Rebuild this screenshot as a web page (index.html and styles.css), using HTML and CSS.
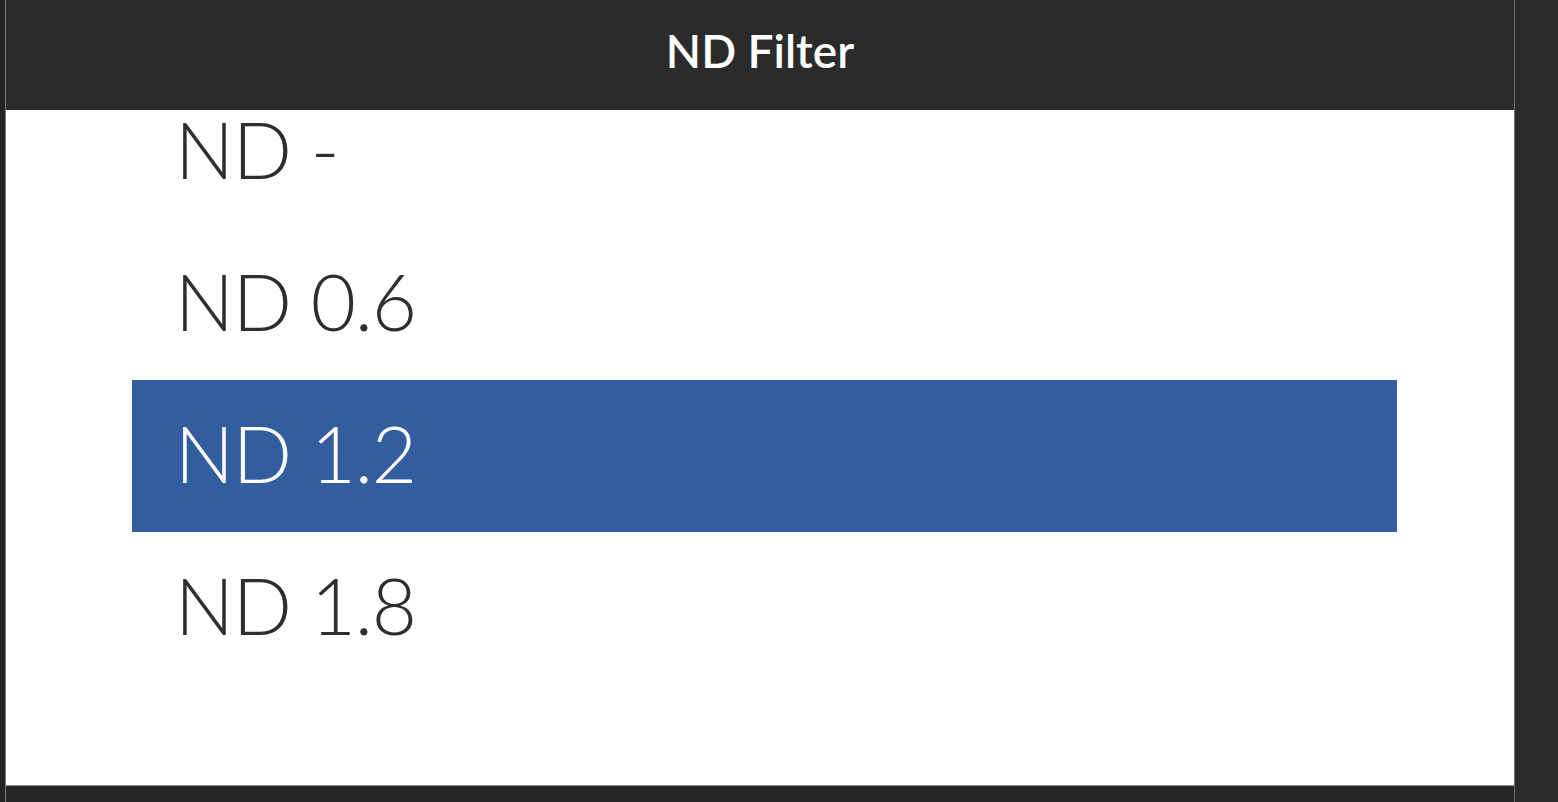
FILE: index.html
```html
<!DOCTYPE html>
<html>
<head>
<meta charset="utf-8">
<link rel="stylesheet" href="styles.css">
</head>
<body>
<div class="frame">
  <div class="left-strip"></div>
  <div class="main">
    <div class="header">ND Filter</div>
    <div class="panel">
      <ul class="list">
        <li class="item">ND -</li>
        <li class="item">ND 0.6</li>
        <li class="item selected">ND 1.2</li>
        <li class="item">ND 1.8</li>
      </ul>
    </div>
    <div class="footer"></div>
  </div>
  <div class="right-strip"></div>
</div>
</body>
</html>
```
FILE: styles.css
```css
html, body {
  margin: 0;
  padding: 0;
  width: 1558px;
  height: 802px;
  overflow: hidden;
  background: #2b2b2b;
  font-family: "Lato", "Noto Sans", sans-serif;
}
.frame {
  display: flex;
  width: 1558px;
  height: 802px;
}
.left-strip {
  width: 5px;
  background: #242424;
  border-right: 1px solid #7a7a7a;
}
.main {
  width: 1508px;
  display: flex;
  flex-direction: column;
  border-right: 1px solid #6a6a6a;
}
.header {
  height: 110px;
  flex: none;
  background: #2b2b2b;
  color: #ffffff;
  font-size: 46px;
  font-weight: 600;
  display: flex;
  align-items: center;
  justify-content: center;
  padding: 0 0 10px 0;
  box-sizing: border-box;
}
.panel {
  flex: none;
  background: #ffffff;
  overflow: hidden;
  border-bottom: 1px solid #8a8a8a;
  box-sizing: border-box;
  height: 676px;
}
.list {
  list-style: none;
  margin: -34px 0 0 126px;
  padding: 0;
  width: 1265px;
}
.item {
  height: 152px;
  display: flex;
  align-items: center;
  padding: 0 0 7px 43px;
  font-size: 78px;
  font-weight: 300;
  letter-spacing: -1.2px;
  color: #2e2e2e;
  box-sizing: border-box;
}
.item.selected {
  background: #345d9f;
  color: #ffffff;
}
.footer {
  flex: 1;
  background: #272727;
}
.right-strip {
  flex: 1;
  background: #2b2b2b;
}
```
